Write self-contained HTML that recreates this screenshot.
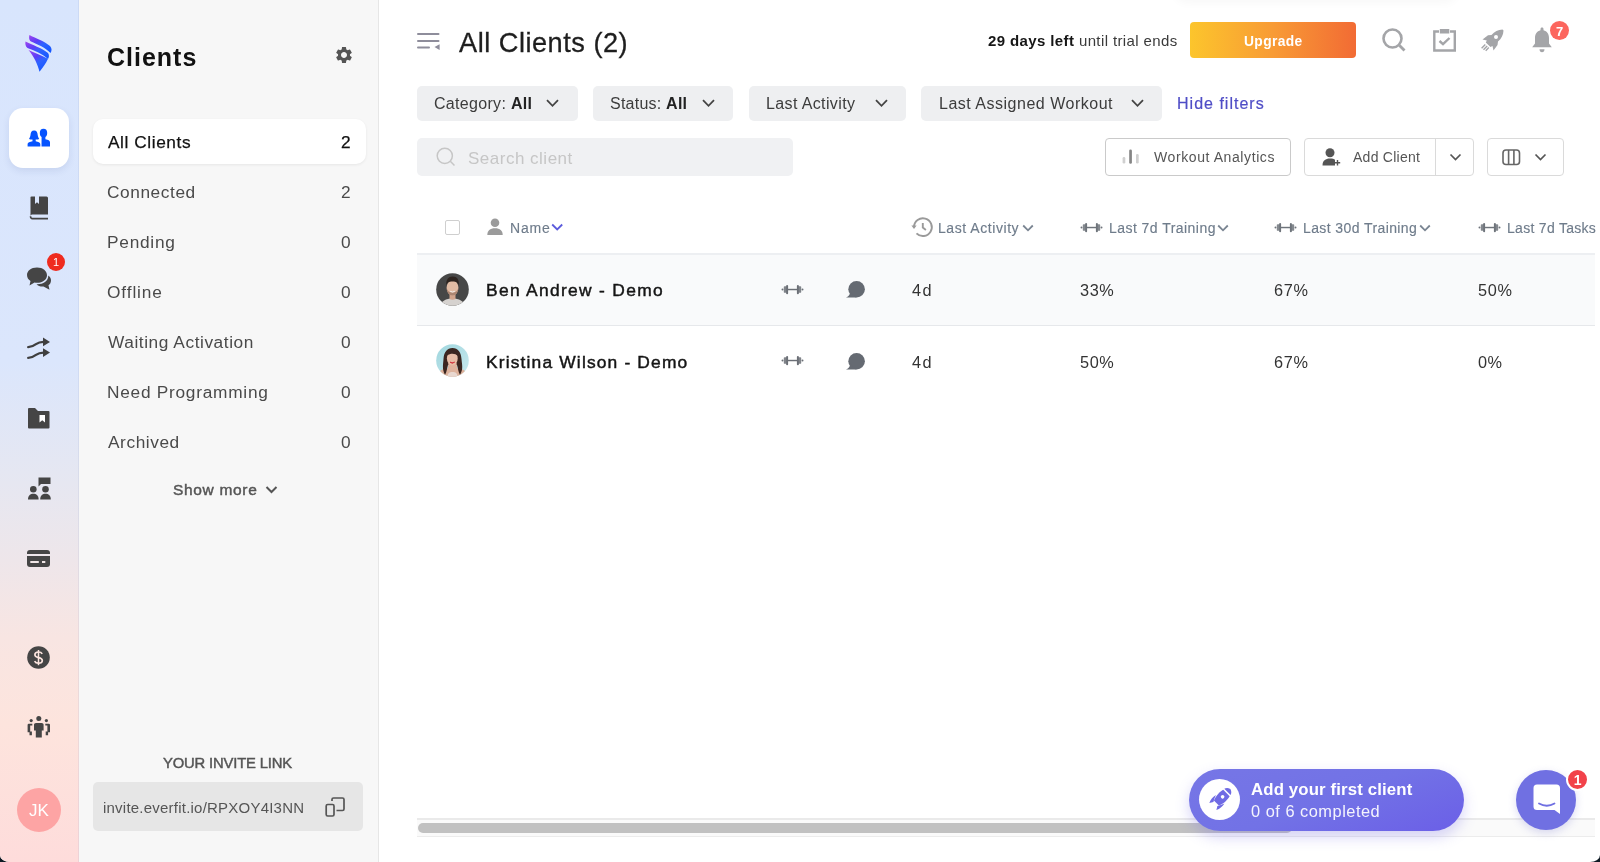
<!DOCTYPE html>
<html><head><meta charset="utf-8">
<style>
*{box-sizing:border-box;margin:0;padding:0}
html,body{width:1600px;height:862px;overflow:hidden;background:#0e1a24}
body{font-family:"Liberation Sans",sans-serif;position:relative}
.frame{position:absolute;left:0;top:0;width:1600px;height:862px;background:#fff;border-radius:0 0 10px 10px / 0 0 7px 7px;overflow:hidden}
.a{position:absolute}
.t{position:absolute;white-space:nowrap;line-height:1;font-family:"Liberation Sans",sans-serif;will-change:transform}
.rail{left:0;top:0;width:79px;box-shadow:inset -1px 0 0 rgba(120,140,190,.12);height:862px;background:linear-gradient(180deg,#d8e5fd 0%,#dbe6fc 42%,#e6e7f1 56%,#eee6ea 65%,#f8e5e2 74%,#fde4dd 84%,#fedcdb 100%)}
.panel{left:79px;top:0;width:300px;height:862px;background:#f7f7f7;border-right:1px solid #e6e6e6}
svg{position:absolute;overflow:visible}
.chip{position:absolute;top:86px;height:35px;background:#eeeff1;border-radius:5px}
.btn{position:absolute;top:138px;height:38px;border:1px solid #d6d6d6;border-radius:4px;background:#fff}
</style></head><body>
<div class="frame">
  <div class="a rail"></div>
  <div class="a panel"></div>

  <!-- rail: logo -->
  <svg style="left:22px;top:32px" width="34" height="42" viewBox="0 0 34 42">
    <defs>
      <linearGradient id="lg1" x1="0.1" y1="0" x2="0.7" y2="1">
        <stop offset="0" stop-color="#9b45f0"/><stop offset="0.35" stop-color="#5b3df6"/><stop offset="0.6" stop-color="#2f63ff"/><stop offset="1" stop-color="#1657ff"/>
      </linearGradient>
    </defs>
    <path d="M7.5 3 C13 6 22 9 28 14 C30 16 30 19 28.5 21 C24 16 15 12 9 9.5 C7 8.5 6.8 5 7.5 3 Z" fill="url(#lg1)"/>
    <path d="M3.5 9.5 C10 13 20 16 26 21 C27.5 23 27 25.5 26 27 C21 22 12 18.5 5.5 16 C3.5 14.5 3 11.5 3.5 9.5 Z" fill="url(#lg1)"/>
    <path d="M6.5 18 C12 20.5 19 23 26 26.8 C24 31.5 20.5 36 17.5 39.8 C16 33 12 24.5 6.5 18 Z" fill="url(#lg1)"/>
  </svg>

  <!-- rail active box -->
  <div class="a" style="left:9px;top:108px;width:60px;height:60px;background:#fff;border-radius:14px;box-shadow:0 3px 7px rgba(40,60,130,.10)"></div>
  <svg style="left:22px;top:122px" width="34" height="30" viewBox="0 0 34 30">
    <ellipse cx="21.5" cy="11.1" rx="3.7" ry="4.3" fill="#0653ff"/>
    <path d="M19.6 13.5 L23.4 13.5 L23.4 17.2 C26.3 17.8 28 18.6 28 20.2 L28 24.6 L19.5 24.6 Z" fill="#0653ff"/>
    <path d="M12.1 8.5 C9.5 8.5 8.7 10.5 8.5 13 C8.3 15 7.5 16 7 16.8 C7.5 17.5 9 17.6 10.5 17.6 L10.5 19.2 C8 19.8 5.6 20.5 5.6 22 L5.6 24.6 L18.3 24.6 L18.3 22 C18.3 20.5 16 19.8 13.7 19.2 L13.7 17.6 C15.2 17.6 16.7 17.5 17.2 16.8 C16.7 16 15.9 15 15.7 13 C15.5 10.5 14.7 8.5 12.1 8.5 Z" fill="#0653ff" stroke="#fff" stroke-width="1.6" paint-order="stroke"/>
  </svg>

  <!-- rail: book -->
  <svg style="left:29px;top:196px" width="20" height="24" viewBox="0 0 20 24">
    <path d="M1.5 1 Q1.5 0.5 2.5 0.5 L6 0.5 L6 8 L8 6.3 L10 8 L10 0.5 L17.5 0.5 Q19 0.5 19 2 L19 18.5 L3 18.5 Q1.5 18.5 1.5 20 Z" fill="#444"/>
    <path d="M1.5 20.3 Q1.5 22.6 3.5 22.6 L19 22.6" stroke="#444" stroke-width="1.6" fill="none"/>
  </svg>

  <!-- rail: chat -->
  <svg style="left:26px;top:266px" width="26" height="26" viewBox="0 0 26 26">
    <path d="M11 1.5 C5 1.5 1 5 1 9 C1 11.5 2.3 13.5 4.5 15 L3.5 19.5 L8.5 16.5 C9.3 16.7 10.2 16.8 11 16.8 C17 16.8 21 13.3 21 9.2 C21 5 17 1.5 11 1.5 Z" fill="#454545"/>
    <path d="M22.3 9.5 C24.5 11 25 13 25 14.5 C25 16.8 23.8 18.5 22.5 19.3 L23.5 23.8 L17.5 20.5 C14.5 20.8 12 19.6 10.5 18.2 C16.5 18.5 22.5 15.5 22.3 9.5 Z" fill="#454545"/>
  </svg>
  <div class="a" style="left:46.5px;top:253px;width:18px;height:18px;border-radius:50%;background:#ef2b1f"></div>
  <div class="t" style="left:46.5px;top:256.5px;width:18px;text-align:center;font-size:11px;color:#fff">1</div>

  <!-- rail: shuffle arrows -->
  <svg style="left:27px;top:337px" width="24" height="24" viewBox="0 0 24 24">
    <g stroke="#3f3f3f" stroke-width="2.3" fill="none" stroke-linecap="round">
      <path d="M1.2 10.2 C4.5 10.2 6.2 9.3 9 7.2 C11.5 5.3 13 4.9 16.5 4.9"/>
      <path d="M1.2 20.9 C4.5 20.9 6.2 20 9 17.9 C11.5 16 13 15.6 16.5 15.6"/>
    </g>
    <g fill="#3f3f3f">
      <path d="M16 0.5 L23 4.9 L16 9.3 Z"/>
      <path d="M16 11.2 L23 15.6 L16 20 Z"/>
    </g>
  </svg>

  <!-- rail: folder -->
  <svg style="left:27px;top:408px" width="23" height="21" viewBox="0 0 23 21">
    <path d="M1 1 Q1 0 2 0 L8 0 L11 3 L21.5 3 Q22.5 3 22.5 4 L22.5 19.5 Q22.5 20.5 21.5 20.5 L2 20.5 Q1 20.5 1 19.5 Z" fill="#454545"/>
    <path d="M12.5 7 L18 7 L18 14.5 L15.25 12.3 L12.5 14.5 Z" fill="#fff"/>
  </svg>

  <!-- rail: group with bubble -->
  <svg style="left:27.6px;top:477px" width="24" height="24" viewBox="0 0 24 24">
    <g fill="#454545">
      <path d="M10.5 0.5 L22.5 0.5 L22.5 7 L13 7 L10.5 9.5 Z"/>
      <circle cx="5.3" cy="12.3" r="3.3"/>
      <path d="M0 22.5 C0 18.5 2.5 16.8 5.3 16.8 C8.2 16.8 10.6 18.5 10.6 22.5 Z"/>
      <circle cx="17.5" cy="12.3" r="3.3"/>
      <path d="M12.2 22.5 C12.2 18.5 14.7 16.8 17.5 16.8 C20.4 16.8 22.8 18.5 22.8 22.5 Z"/>
    </g>
  </svg>

  <!-- rail: card -->
  <svg style="left:27px;top:550px" width="24" height="18" viewBox="0 0 24 18">
    <path d="M0 3 Q0 0 3 0 L20 0 Q23 0 23 3 L23 4 L0 4 Z" fill="#454545"/>
    <path d="M0 6 L23 6 L23 14 Q23 17 20 17 L3 17 Q0 17 0 14 Z" fill="#454545"/>
    <rect x="3.3" y="11" width="8.5" height="2" fill="#f0e6e6"/>
    <rect x="15" y="11" width="3.3" height="2" fill="#f0e6e6"/>
  </svg>

  <!-- rail: dollar -->
  <svg style="left:27px;top:646px" width="23" height="23" viewBox="0 0 23 23">
    <circle cx="11.5" cy="11.5" r="11.3" fill="#454545"/>
    <path d="M15.2 7.8 C14.5 6.5 13.1 6 11.5 6 C9.4 6 7.9 7 7.9 8.8 C7.9 10.7 9.6 11.2 11.5 11.6 C13.5 12 15.3 12.6 15.3 14.5 C15.3 16.3 13.6 17.2 11.5 17.2 C9.7 17.2 8.3 16.5 7.6 15.1" stroke="#fbe4de" stroke-width="1.7" fill="none"/>
    <path d="M11.5 4 L11.5 19.2" stroke="#fbe4de" stroke-width="1.5"/>
  </svg>

  <!-- rail: team -->
  <svg style="left:27px;top:715px" width="24" height="24" viewBox="0 0 24 24">
    <g fill="#454545">
      <circle cx="11.8" cy="3.6" r="2.5"/>
      <path d="M7 9.5 Q7 8 9 8 L14.6 8 Q16.6 8 16.6 9.5 L16.6 15.5 L14.8 15.5 L14.8 22.6 L8.8 22.6 L8.8 15.5 L7 15.5 Z"/>
      <circle cx="4.2" cy="5.6" r="1.6"/>
      <circle cx="19.4" cy="5.6" r="1.6"/>
      <path d="M0.6 10 Q0.6 8.8 1.8 8.8 L5.3 8.8 L5.3 10.6 L3.2 10.6 L3.2 16.5 L4.9 16.5 L4.9 20.2 L2.5 20.2 L2.5 17.3 L0.6 17.3 Z"/>
      <path d="M23 10 Q23 8.8 21.8 8.8 L18.3 8.8 L18.3 10.6 L20.4 10.6 L20.4 16.5 L18.7 16.5 L18.7 20.2 L21.1 20.2 L21.1 17.3 L23 17.3 Z"/>
    </g>
  </svg>

  <!-- rail: avatar JK -->
  <div class="a" style="left:16.8px;top:787.5px;width:44px;height:44px;border-radius:50%;background:#fda4a4"></div>
  <div class="t" style="left:16.8px;top:801.5px;width:44px;text-align:center;font-size:17px;color:#fff">JK</div>

  <!-- panel: gear -->
  <svg style="left:334px;top:45px" width="20" height="20" viewBox="0 0 24 24">
    <path fill="#555" d="M19.14 12.94c.04-.3.06-.61.06-.94 0-.32-.02-.64-.07-.94l2.03-1.58a.49.49 0 0 0 .12-.61l-1.92-3.32a.488.488 0 0 0-.59-.22l-2.39.96c-.5-.38-1.03-.7-1.62-.94l-.36-2.54a.484.484 0 0 0-.48-.41h-3.84c-.24 0-.43.17-.47.41l-.36 2.54c-.59.24-1.13.57-1.62.94l-2.39-.96c-.22-.08-.47 0-.59.22L2.74 8.87c-.12.21-.08.47.12.61l2.03 1.58c-.05.3-.09.63-.09.94s.02.64.07.94l-2.03 1.58a.49.49 0 0 0-.12.61l1.92 3.32c.12.22.37.29.59.22l2.39-.96c.5.38 1.03.7 1.62.94l.36 2.54c.05.24.24.41.48.41h3.84c.24 0 .44-.17.47-.41l.36-2.54c.59-.24 1.13-.56 1.62-.94l2.39.96c.22.08.47 0 .59-.22l1.92-3.32c.12-.22.07-.47-.12-.61l-2.01-1.58zM12 15.6c-1.98 0-3.6-1.62-3.6-3.6s1.62-3.6 3.6-3.6 3.6 1.62 3.6 3.6-1.62 3.6-3.6 3.6z"/>
  </svg>

  <!-- panel: active item -->
  <div class="a" style="left:93px;top:119px;width:273px;height:45px;background:#fff;border-radius:10px;box-shadow:0 1px 3px rgba(0,0,0,.07)"></div>

  <!-- show more chevron -->
  <svg style="left:265px;top:485px" width="13" height="9" viewBox="0 0 13 9">
    <path d="M1.5 2 L6.5 7 L11.5 2" stroke="#555" stroke-width="2" fill="none"/>
  </svg>

  <!-- invite box -->
  <div class="a" style="left:93px;top:782px;width:270px;height:49px;background:#e6e6e6;border-radius:5px"></div>
  <svg style="left:325px;top:797px" width="21" height="21" viewBox="0 0 21 21">
    <g stroke="#555" stroke-width="1.7" fill="none">
      <rect x="1.2" y="7.5" width="7.8" height="11.5" rx="1.5"/>
      <path d="M7 4 L7 2.5 Q7 1 8.5 1 L17.5 1 Q19 1 19 2.5 L19 12 Q19 13.5 17.5 13.5 L11.5 13.5"/>
    </g>
  </svg>

  <!-- ===== MAIN ===== -->
  <div class="a" style="left:1175px;top:-30px;width:282px;height:30px;border-radius:0 0 12px 12px;background:#fff;box-shadow:0 3px 10px rgba(0,0,0,.03)"></div>
  <!-- menu icon -->
  <svg style="left:417px;top:32px" width="24" height="18" viewBox="0 0 24 18">
    <g fill="#8e8d9b">
      <rect x="0" y="1.1" width="22.5" height="2" rx="1"/>
      <rect x="0" y="7.9" width="22.5" height="2" rx="1"/>
      <rect x="0" y="14.4" width="13" height="2" rx="1"/>
      <path d="M22.6 12.2 L22.6 18 L17.5 15.1 Z"/>
    </g>
  </svg>

  <!-- upgrade -->
  <div class="a" style="left:1190px;top:22px;width:166px;height:35.5px;border-radius:4px;background:linear-gradient(90deg,#fcc52c 0%,#f89b35 50%,#f26b34 100%)"></div>

  <!-- top icons -->
  <svg style="left:1382px;top:28px" width="26" height="24" viewBox="0 0 26 24">
    <circle cx="10.5" cy="10.5" r="9" stroke="#a4a5a8" stroke-width="2.6" fill="none"/>
    <path d="M17.5 17.5 L22.5 22.5" stroke="#a4a5a8" stroke-width="2.8"/>
  </svg>
  <svg style="left:1433px;top:29px" width="24" height="24" viewBox="0 0 24 24">
    <path d="M6 2.5 L1.3 2.5 L1.3 21.5 L21.8 21.5 L21.8 2.5 L17 2.5" stroke="#a4a5a8" stroke-width="2.4" fill="none"/>
    <rect x="6.8" y="0" width="9.5" height="4.5" fill="#a4a5a8"/>
    <path d="M6.5 12 L10 15.2 L16.5 9" stroke="#a4a5a8" stroke-width="2.4" fill="none"/>
  </svg>
  <svg style="left:1481px;top:29px" width="24" height="23" viewBox="0 0 24 23">
    <g fill="#a4a5a8">
      <path d="M21.5 0.5 C17 0.8 13.5 2.5 10.5 6 L7 6.3 L1.5 10.5 L5.8 11.5 L4.8 13.5 L9.5 18 L11.5 17 L12.5 21.5 L16.5 16 L17 12.5 C20.5 9.5 22.3 6 22.5 1.5 Z"/>
      <path d="M4.3 15.5 L0.6 19.2 M6.2 17 L2.5 20.7 M7.8 18.6 L4.7 21.8" stroke="#a4a5a8" stroke-width="1.4"/>
    </g>
    <circle cx="15" cy="8" r="2" fill="#fff"/>
  </svg>
  <svg style="left:1531px;top:27px" width="22" height="26" viewBox="0 0 22 26">
    <path fill="#a4a5a8" d="M11 0.5 C12 0.5 12.5 1.2 12.5 2.2 L12.5 3.2 C16 4 18 7 18 11 L18 16.5 L20.8 20.2 L1.2 20.2 L4 16.5 L4 11 C4 7 6 4 9.5 3.2 L9.5 2.2 C9.5 1.2 10 0.5 11 0.5 Z"/>
    <path fill="#a4a5a8" d="M8.5 22.3 L13.5 22.3 C13.5 24.3 12.5 25.2 11 25.2 C9.5 25.2 8.5 24.3 8.5 22.3 Z"/>
  </svg>
  <div class="a" style="left:1550px;top:21px;width:19px;height:19px;border-radius:50%;background:#fc665e"></div>
  <div class="t" style="left:1550px;top:24.5px;width:19px;text-align:center;font-size:13px;font-weight:700;color:#fff">7</div>

  <!-- filter chips -->
  <div class="chip" style="left:417px;width:161px"></div>
  <div class="chip" style="left:593px;width:140px"></div>
  <div class="chip" style="left:749px;width:157px"></div>
  <div class="chip" style="left:921px;width:241px"></div>
  <svg style="left:546px;top:99px" width="13" height="9" viewBox="0 0 13 9"><path d="M1 1.2 L6.5 6.8 L12 1.2" stroke="#444" stroke-width="1.8" fill="none"/></svg>
  <svg style="left:702px;top:99px" width="13" height="9" viewBox="0 0 13 9"><path d="M1 1.2 L6.5 6.8 L12 1.2" stroke="#444" stroke-width="1.8" fill="none"/></svg>
  <svg style="left:874.5px;top:99px" width="13" height="9" viewBox="0 0 13 9"><path d="M1 1.2 L6.5 6.8 L12 1.2" stroke="#444" stroke-width="1.8" fill="none"/></svg>
  <svg style="left:1130.5px;top:99px" width="13" height="9" viewBox="0 0 13 9"><path d="M1 1.2 L6.5 6.8 L12 1.2" stroke="#444" stroke-width="1.8" fill="none"/></svg>

  <!-- search -->
  <div class="a" style="left:417px;top:138px;width:375.5px;height:38px;background:#f0f1f3;border-radius:5px"></div>
  <svg style="left:436px;top:147px" width="22" height="20" viewBox="0 0 22 20">
    <circle cx="8.8" cy="8.8" r="7.6" stroke="#c6c6c6" stroke-width="1.5" fill="none"/>
    <path d="M14.3 14.3 L18.5 18.5" stroke="#c6c6c6" stroke-width="1.5"/>
  </svg>

  <!-- buttons -->
  <div class="btn" style="left:1105px;width:186px;border-color:#cacaca"></div>
  <svg style="left:1122px;top:148px" width="18" height="16" viewBox="0 0 18 16">
    <rect x="0.6" y="9" width="2.7" height="6.6" rx="1.3" fill="#d0d0d0"/>
    <rect x="7.2" y="1.5" width="2.7" height="14.2" rx="1.3" fill="#858585"/>
    <rect x="14" y="6" width="2.7" height="9.6" rx="1.3" fill="#d0d0d0"/>
  </svg>
  <div class="btn" style="left:1304px;width:170px;border-color:#dadada"></div>
  <div class="a" style="left:1435px;top:139px;width:1px;height:36px;background:#dadada"></div>
  <svg style="left:1322px;top:148px" width="20" height="18" viewBox="0 0 20 18">
    <g fill="#555">
      <circle cx="8" cy="4.8" r="4.5"/>
      <path d="M0.5 17.5 C0.5 12.5 3.5 10.5 8 10.5 C10.5 10.5 12 11 13 11.8 L13 17.5 Z"/>
      <path d="M14.8 12 L16.2 12 L16.2 14 L18.2 14 L18.2 15.4 L16.2 15.4 L16.2 17.4 L14.8 17.4 L14.8 15.4 L12.8 15.4 L12.8 14 L14.8 14 Z"/>
    </g>
  </svg>
  <svg style="left:1448.5px;top:153px" width="13" height="9" viewBox="0 0 13 9"><path d="M1.5 1.5 L6.5 6.5 L11.5 1.5" stroke="#555" stroke-width="1.7" fill="none"/></svg>
  <div class="btn" style="left:1487px;width:77px;border-color:#dadada"></div>
  <svg style="left:1502px;top:149px" width="19" height="17" viewBox="0 0 19 17">
    <rect x="1" y="1" width="16.5" height="14.5" rx="3" stroke="#666" stroke-width="1.6" fill="none"/>
    <path d="M6.6 1 L6.6 15.5 M11.9 1 L11.9 15.5" stroke="#666" stroke-width="1.6"/>
  </svg>
  <svg style="left:1534px;top:153px" width="13" height="9" viewBox="0 0 13 9"><path d="M1.5 1.5 L6.5 6.5 L11.5 1.5" stroke="#555" stroke-width="1.7" fill="none"/></svg>

  <!-- table header -->
  <div class="a" style="left:445px;top:220px;width:15px;height:15px;border:1.6px solid #cfcfcf;border-radius:2px"></div>
  <svg style="left:486.5px;top:218px" width="17" height="17" viewBox="0 0 17 17">
    <g fill="#9b9b9b"><circle cx="8" cy="4.8" r="4.3"/><path d="M0.3 17 C0.3 12.5 3 10.2 8 10.2 C13 10.2 15.7 12.5 15.7 17 Z"/></g>
  </svg>
  <svg style="left:551px;top:223px" width="13" height="9" viewBox="0 0 13 9"><path d="M1.2 1.5 L6.2 6.5 L11.2 1.5" stroke="#5b5bdc" stroke-width="1.8" fill="none"/></svg>
  <svg style="left:911px;top:217px" width="22" height="21" viewBox="0 0 22 21">
    <path d="M3 10 A8.9 8.9 0 1 1 5.5 16.3" stroke="#9a9a9a" stroke-width="1.9" fill="none"/>
    <path d="M0.4 8.6 L5.6 8.6 L3 12 Z" fill="#9a9a9a"/>
    <path d="M11.8 6.1 L11.8 10.6 L14.9 12.9" stroke="#9a9a9a" stroke-width="1.9" fill="none"/>
  </svg>
  <svg style="left:1022px;top:223.5px" width="13" height="9" viewBox="0 0 13 9"><path d="M1.2 1.5 L6 6.3 L10.8 1.5" stroke="#7a8592" stroke-width="1.8" fill="none"/></svg>
  <svg style="left:1217px;top:223.5px" width="13" height="9" viewBox="0 0 13 9"><path d="M1.2 1.5 L6 6.3 L10.8 1.5" stroke="#7a8592" stroke-width="1.8" fill="none"/></svg>
  <svg style="left:1419px;top:223.5px" width="13" height="9" viewBox="0 0 13 9"><path d="M1.2 1.5 L6 6.3 L10.8 1.5" stroke="#7a8592" stroke-width="1.8" fill="none"/></svg>
  <!-- header dumbbells -->
  <svg style="left:1079.6px;top:221.5px" width="23" height="11" viewBox="0 0 23 11"><use href="#db" fill="#6e747b"/></svg>
  <svg style="left:1273.8px;top:221.5px" width="23" height="11" viewBox="0 0 23 11"><use href="#db" fill="#6e747b"/></svg>
  <svg style="left:1478px;top:221.5px" width="23" height="11" viewBox="0 0 23 11"><use href="#db" fill="#6e747b"/></svg>
  <svg width="0" height="0" style="left:0;top:0">
    <defs>
      <g id="db">
        <circle cx="1.5" cy="5.5" r="1"/>
        <rect x="2.8" y="2.2" width="2.9" height="6.6" rx="0.9" opacity=".85"/>
        <rect x="5.1" y="0.9" width="2" height="9.3" rx="1"/>
        <rect x="7" y="4.8" width="9" height="1.45"/>
        <rect x="15.9" y="0.9" width="2" height="9.3" rx="1"/>
        <rect x="17.3" y="2.2" width="2.9" height="6.6" rx="0.9" opacity=".85"/>
        <circle cx="21.5" cy="5.5" r="1"/>
      </g>
      <g id="bub">
        <circle cx="10.6" cy="8.25" r="8.3"/>
        <path d="M0 16.6 L10.6 16.55 L4.2 10.5 C4.3 13 3 15.5 0 16.6 Z"/>
      </g>
    </defs>
  </svg>
  <div class="a" style="left:417px;top:253px;width:1178px;height:2px;background:#edeff2"></div>

  <!-- rows -->
  <div class="a" style="left:417px;top:255px;width:1178px;height:70px;background:#f9fafb"></div>
  <div class="a" style="left:417px;top:325px;width:1178px;height:1px;background:#e6e8eb"></div>
  <svg style="left:780.8px;top:283.8px" width="23" height="11" viewBox="0 0 23 11"><use href="#db" fill="#6b6f76"/></svg>
  <svg style="left:780.8px;top:355.3px" width="23" height="11" viewBox="0 0 23 11"><use href="#db" fill="#6b6f76"/></svg>
  <svg style="left:846px;top:281.2px" width="19" height="17" viewBox="0 0 19 17"><use href="#bub" fill="#656a72"/></svg>
  <svg style="left:846px;top:352.5px" width="19" height="17" viewBox="0 0 19 17"><use href="#bub" fill="#656a72"/></svg>

  <!-- avatars -->
  <svg style="left:435.5px;top:273px" width="33" height="33" viewBox="0 0 33 33">
    <defs><clipPath id="c1"><circle cx="16.5" cy="16.5" r="16.3"/></clipPath></defs>
    <g clip-path="url(#c1)">
      <rect width="33" height="33" fill="#474747"/>
      <path d="M4 33 C5 28 10 25.5 16.5 25.5 C23 25.5 28 28 29 33 Z" fill="#d6d2cf"/>
      <path d="M13.5 20 L19.5 20 L19.5 26 C18 27 15 27 13.5 26 Z" fill="#d2a48c"/>
      <ellipse cx="16.5" cy="14.8" rx="5.9" ry="7.6" fill="#e2bba3"/>
      <path d="M10.6 15 C10.8 19.5 13 22.4 16.5 22.4 C20 22.4 22.2 19.5 22.4 15 C21.5 18 19.5 19.5 16.5 19.5 C13.5 19.5 11.5 18 10.6 15 Z" fill="#9a7360" opacity=".75"/>
      <path d="M10.2 13 C9.8 6.5 12.5 3.5 16.5 3.5 C21 3.5 23.5 6.5 22.8 13 C22 9.5 20.5 8.5 16.5 8.5 C12.5 8.5 11 9.5 10.2 13 Z" fill="#2e241f"/>
      <path d="M14.2 18.3 Q16.5 19.8 18.8 18.3" stroke="#f4f0ee" stroke-width="1" fill="none"/>
    </g>
  </svg>
  <svg style="left:435.5px;top:344px" width="33" height="33" viewBox="0 0 33 33">
    <defs>
      <clipPath id="c2"><circle cx="16.5" cy="16.5" r="16.3"/></clipPath>
      <linearGradient id="fbg" x1="0" y1="0" x2="1" y2="1"><stop offset="0" stop-color="#9fd6de"/><stop offset="1" stop-color="#c9e9ee"/></linearGradient>
    </defs>
    <g clip-path="url(#c2)">
      <rect width="33" height="33" fill="url(#fbg)"/>
      <path d="M1 33 C2 27 6 25 10 24.5 L23 24.5 C27 25 31 27 32 33 Z" fill="#ddb29c"/>
      
      <path d="M9 31 C6 25 7 21 7.5 15 C8 8 11 4 16.5 4 C22 4 25 8 25.5 15 C26 21 27.5 25 24 31 C22 27 22 24 21 21 L12 21 C11 24 11 27 9 31 Z" fill="#3b2620"/>
      <path d="M12.5 19 L20.5 19 L21.5 27.5 L11.5 27.5 Z" fill="#dfb39d"/>
      <ellipse cx="16.3" cy="14.5" rx="5.4" ry="7" fill="#e7bda6"/>
      <path d="M11.5 33 C11.5 29 13.5 28 16.5 28 C19.5 28 21.5 29 21.5 33 Z" fill="#e9d8d0"/>
      <path d="M10.9 11.5 C11.5 7.5 14 6.5 16.5 6.5 C19.5 6.5 21.5 8.5 21.8 12 C19.5 9.5 15 9 10.9 11.5 Z" fill="#3b2620"/>
      <path d="M14 18.2 Q16.3 20.2 18.6 18.2 Q16.3 19.2 14 18.2 Z" fill="#d23c44" stroke="#d23c44" stroke-width="1"/>
    </g>
  </svg>

  <!-- scrollbar -->
  <div class="a" style="left:417px;top:818px;width:1178px;height:19px;background:#fafafa;border-top:2px solid #eaeaea;border-bottom:1px solid #ececec"></div>
  <div class="a" style="left:418px;top:823px;width:874px;height:10px;background:#c1c1c1;border-radius:5px"></div>

  <!-- onboarding pill -->
  <div class="a" style="left:1188.5px;top:768.5px;width:275px;height:62.5px;border-radius:32px;background:linear-gradient(160deg,#7676e6 0%,#7272e6 50%,#6b5fe7 100%);box-shadow:0 6px 14px rgba(110,100,230,.28)"></div>
  <div class="a" style="left:1199px;top:779px;width:41px;height:41px;border-radius:50%;background:#fff"></div>
  <svg style="left:1195px;top:775px" width="50" height="50" viewBox="0 0 50 50">
    <g transform="translate(26.2 23.2) rotate(45)" fill="#6f6ae4">
      <path d="M0 -13 C2.6 -12.2 4 -10.6 4.4 -8.8 L-4.4 -8.8 C-4 -10.6 -2.6 -12.2 0 -13 Z"/>
      <path d="M-4.5 -7.4 L4.5 -7.4 C5.6 -4 5.6 2 3.5 6.8 L-3.5 6.8 C-5.6 2 -5.6 -4 -4.5 -7.4 Z"/>
      <path d="M-6 1.5 C-6.9 4.5 -6.6 8.5 -5 11.8 L-2.8 8.2 C-4 6.3 -5 4 -6 1.5 Z"/>
      <path d="M6 1.5 C6.9 4.5 6.6 8.5 5 11.8 L2.8 8.2 C4 6.3 5 4 6 1.5 Z"/>
      <circle cx="0" cy="-2" r="1.8" fill="#fff"/>
    </g>
  </svg>

  <!-- chat widget -->
  <div class="a" style="left:1516px;top:769.5px;width:60px;height:60px;border-radius:50%;background:#7070e2;box-shadow:0 3px 8px rgba(90,90,200,.22)"></div>
  <svg style="left:1533px;top:784px" width="28" height="31" viewBox="0 0 28 31">
    <path d="M4 0.5 L23.5 0.5 Q27 0.5 27 4 L27 30 L21.5 26 L4 26 Q0.5 26 0.5 22.5 L0.5 4 Q0.5 0.5 4 0.5 Z" fill="#fff"/>
    <path d="M6 19.5 Q13.8 24 21.5 19.5" stroke="#7070e2" stroke-width="1.8" fill="none" stroke-linecap="round"/>
  </svg>
  <div class="a" style="left:1565.5px;top:767.5px;width:23.5px;height:23.5px;border-radius:50%;background:#f2424a;border:2px solid #fff"></div>
  <div class="t" style="left:1565.5px;top:772.5px;width:23.5px;text-align:center;font-size:14px;font-weight:700;color:#fff">1</div>

<div class="t" style="left:107.00px;top:45.00px;font-size:25px;font-weight:700;color:#111;letter-spacing:1.000px;">Clients</div>
<div class="t" style="left:108.20px;top:134.00px;font-size:17.3px;font-weight:400;color:#111;letter-spacing:0.570px;-webkit-text-stroke-width:0.25px;">All Clients</div>
<div class="t" style="left:341.00px;top:134.00px;font-size:17.3px;font-weight:400;color:#111;-webkit-text-stroke-width:0.25px;">2</div>
<div class="t" style="left:107.20px;top:184.00px;font-size:17.3px;font-weight:400;color:#4a4a4a;letter-spacing:0.575px;">Connected</div>
<div class="t" style="left:341.00px;top:184.00px;font-size:17.3px;font-weight:400;color:#4a4a4a;">2</div>
<div class="t" style="left:107.20px;top:234.00px;font-size:17.3px;font-weight:400;color:#4a4a4a;letter-spacing:0.750px;">Pending</div>
<div class="t" style="left:341.00px;top:234.00px;font-size:17.3px;font-weight:400;color:#4a4a4a;">0</div>
<div class="t" style="left:107.20px;top:284.00px;font-size:17.3px;font-weight:400;color:#4a4a4a;letter-spacing:0.883px;">Offline</div>
<div class="t" style="left:341.00px;top:284.00px;font-size:17.3px;font-weight:400;color:#4a4a4a;">0</div>
<div class="t" style="left:108.20px;top:334.00px;font-size:17.3px;font-weight:400;color:#4a4a4a;letter-spacing:0.565px;">Waiting Activation</div>
<div class="t" style="left:341.00px;top:334.00px;font-size:17.3px;font-weight:400;color:#4a4a4a;">0</div>
<div class="t" style="left:107.20px;top:384.00px;font-size:17.3px;font-weight:400;color:#4a4a4a;letter-spacing:0.733px;">Need Programming</div>
<div class="t" style="left:341.00px;top:384.00px;font-size:17.3px;font-weight:400;color:#4a4a4a;">0</div>
<div class="t" style="left:108.20px;top:434.00px;font-size:17.3px;font-weight:400;color:#4a4a4a;letter-spacing:0.571px;">Archived</div>
<div class="t" style="left:341.00px;top:434.00px;font-size:17.3px;font-weight:400;color:#4a4a4a;">0</div>
<div class="t" style="left:172.60px;top:482.00px;font-size:15.5px;font-weight:400;color:#555;letter-spacing:0.675px;-webkit-text-stroke-width:0.45px;">Show more</div>
<div class="t" style="left:163.30px;top:756.00px;font-size:14.8px;font-weight:400;color:#555;letter-spacing:-0.160px;-webkit-text-stroke-width:0.45px;">YOUR INVITE LINK</div>
<div class="t" style="left:103.40px;top:800.00px;font-size:15px;font-weight:400;color:#555;letter-spacing:0.222px;">invite.everfit.io/RPXOY4I3NN</div>
<div class="t" style="left:459.00px;top:29.00px;font-size:27.2px;font-weight:400;color:#1e1e1e;letter-spacing:0.500px;-webkit-text-stroke-width:0.3px;">All Clients (2)</div>
<div class="t" style="left:988.10px;top:33.00px;font-size:15px;font-weight:400;color:#3a3a3a;letter-spacing:0.386px;"><b style="color:#161616">29 days left</b> until trial ends</div>
<div class="t" style="left:1243.50px;top:35.00px;font-size:13.8px;font-weight:700;color:#fff;letter-spacing:0.367px;">Upgrade</div>
<div class="t" style="left:434.00px;top:96.00px;font-size:16px;font-weight:400;color:#3c3c3c;letter-spacing:0.308px;">Category: <b style="color:#222">All</b></div>
<div class="t" style="left:610.10px;top:96.00px;font-size:16px;font-weight:400;color:#3c3c3c;letter-spacing:0.230px;">Status: <b style="color:#222">All</b></div>
<div class="t" style="left:766.00px;top:96.00px;font-size:16px;font-weight:400;color:#3c3c3c;letter-spacing:0.375px;">Last Activity</div>
<div class="t" style="left:938.50px;top:96.00px;font-size:16px;font-weight:400;color:#3c3c3c;letter-spacing:0.510px;">Last Assigned Workout</div>
<div class="t" style="left:1177.20px;top:96.00px;font-size:16px;font-weight:400;color:#4f4dc6;letter-spacing:1.009px;-webkit-text-stroke-width:0.2px;">Hide filters</div>
<div class="t" style="left:468.00px;top:150.00px;font-size:17px;font-weight:400;color:#c6c6c6;letter-spacing:0.500px;">Search client</div>
<div class="t" style="left:1154.30px;top:150.00px;font-size:14px;font-weight:400;color:#555;letter-spacing:0.588px;">Workout Analytics</div>
<div class="t" style="left:1353.40px;top:150.00px;font-size:14px;font-weight:400;color:#555;letter-spacing:0.267px;">Add Client</div>
<div class="t" style="left:509.60px;top:221.00px;font-size:14px;font-weight:400;color:#6f7c8b;letter-spacing:0.800px;-webkit-text-stroke-width:0.15px;">Name</div>
<div class="t" style="left:938.40px;top:221.00px;font-size:14px;font-weight:400;color:#6f7c8b;letter-spacing:0.558px;-webkit-text-stroke-width:0.15px;">Last Activity</div>
<div class="t" style="left:1109.00px;top:221.00px;font-size:14px;font-weight:400;color:#6f7c8b;letter-spacing:0.453px;-webkit-text-stroke-width:0.15px;">Last 7d Training</div>
<div class="t" style="left:1303.40px;top:221.00px;font-size:14px;font-weight:400;color:#6f7c8b;letter-spacing:0.400px;-webkit-text-stroke-width:0.15px;">Last 30d Training</div>
<div class="t" style="left:1506.90px;top:221.00px;font-size:14px;font-weight:400;color:#6f7c8b;letter-spacing:0.292px;-webkit-text-stroke-width:0.15px;">Last 7d Tasks</div>
<div class="t" style="left:485.50px;top:282.00px;font-size:17.4px;font-weight:400;color:#151515;letter-spacing:1.312px;-webkit-text-stroke-width:0.45px;">Ben Andrew - Demo</div>
<div class="t" style="left:485.50px;top:354.00px;font-size:17.4px;font-weight:400;color:#151515;letter-spacing:1.162px;-webkit-text-stroke-width:0.45px;">Kristina Wilson - Demo</div>
<div class="t" style="left:911.60px;top:282.00px;font-size:16.3px;font-weight:400;color:#333;letter-spacing:1.500px;">4d</div>
<div class="t" style="left:911.60px;top:354.00px;font-size:16.3px;font-weight:400;color:#333;letter-spacing:1.500px;">4d</div>
<div class="t" style="left:1079.90px;top:282.00px;font-size:16.3px;font-weight:400;color:#333;letter-spacing:0.600px;">33%</div>
<div class="t" style="left:1273.70px;top:282.00px;font-size:16.3px;font-weight:400;color:#333;letter-spacing:0.750px;">67%</div>
<div class="t" style="left:1477.90px;top:282.00px;font-size:16.3px;font-weight:400;color:#333;letter-spacing:0.700px;">50%</div>
<div class="t" style="left:1079.90px;top:354.00px;font-size:16.3px;font-weight:400;color:#333;letter-spacing:0.600px;">50%</div>
<div class="t" style="left:1273.70px;top:354.00px;font-size:16.3px;font-weight:400;color:#333;letter-spacing:0.750px;">67%</div>
<div class="t" style="left:1477.90px;top:354.00px;font-size:16.3px;font-weight:400;color:#333;letter-spacing:0.400px;">0%</div>
<div class="t" style="left:1251.20px;top:782.00px;font-size:16.8px;font-weight:700;color:#fff;letter-spacing:0.140px;">Add your first client</div>
<div class="t" style="left:1251.20px;top:803.00px;font-size:16.4px;font-weight:400;color:rgba(255,255,255,.92);letter-spacing:0.500px;">0 of 6 completed</div>
</div>
</body></html>
